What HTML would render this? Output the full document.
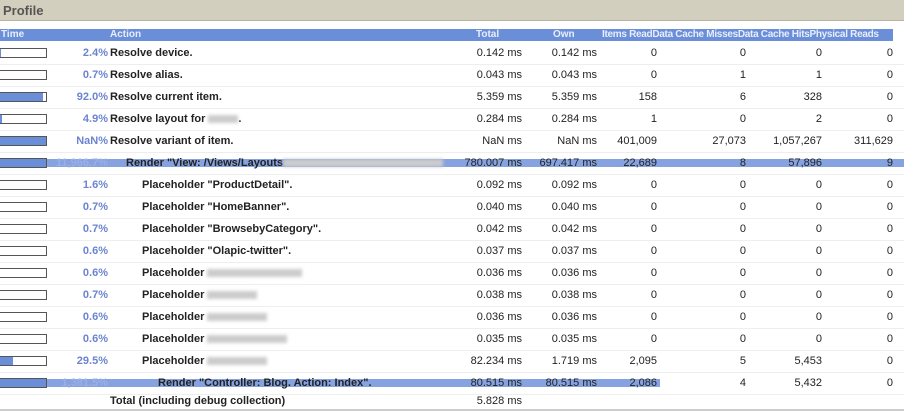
<!DOCTYPE html>
<html><head><style>
body{margin:0;width:904px;height:411px;overflow:hidden;background:#fff;font-family:"Liberation Sans",sans-serif;font-size:11px;color:#222;position:relative}
.hdr{position:absolute;left:0;top:0;width:904px;height:20px;background:#d3cfbf;border-bottom:1px solid #b8b4a4}
.hdr span{position:absolute;left:3px;top:3px;font-size:13px;color:#555;font-weight:bold}
.ch{position:absolute;left:0;top:29px;width:893px;height:12px;background:#6b8ed8;color:#e8eefc;font-size:10px;line-height:12px;font-weight:bold}
.ch span{position:absolute;top:0}
.r{position:absolute;left:0;width:904px;height:22px;border-bottom:1px solid #eee;line-height:22px}
.r>*{position:absolute;top:0}
.bar{left:0;top:6px;width:46px;height:8px;border:1px solid #555;border-left:none;background:#fff}
.bar i{position:absolute;left:0;top:0;height:8px;background:#6b8ed8}
.p{right:796px;color:#6b84d0;font-weight:bold;text-align:right}
.a{font-weight:bold;white-space:nowrap}
.n{text-align:right}
.c1{right:382px}.c2{right:307px}.c3{right:247px}.c4{right:158px}.c5{right:82px}.c6{right:11px}
.bl{display:inline-block;width:70px;height:8px;background:#ccc;vertical-align:middle;filter:blur(1.5px)}
.hl{position:absolute;left:0;top:7px;height:8px;background:#86a2e0}
</style></head><body>
<div class="hdr"><span>Profile</span></div>
<div class="ch"><span style="left:1px">Time</span><span style="left:110px">Action</span><span style="left:476px">Total</span><span style="left:553px">Own</span><span style="left:602px;letter-spacing:-0.3px">Items ReadData Cache MissesData Cache HitsPhysical Reads</span></div>

<div class="r" style="top:42px"><div class="bar"><i style="width:1px"></i></div><span class="p">2.4%</span><span class="a" style="left:110px">Resolve device.</span><span class="n c1">0.142 ms</span><span class="n c2">0.142 ms</span><span class="n c3">0</span><span class="n c4">0</span><span class="n c5">0</span><span class="n c6">0</span></div>
<div class="r" style="top:64px"><div class="bar"></div><span class="p">0.7%</span><span class="a" style="left:110px">Resolve alias.</span><span class="n c1">0.043 ms</span><span class="n c2">0.043 ms</span><span class="n c3">0</span><span class="n c4">1</span><span class="n c5">1</span><span class="n c6">0</span></div>
<div class="r" style="top:86px"><div class="bar"><i style="width:43px"></i></div><span class="p">92.0%</span><span class="a" style="left:110px">Resolve current item.</span><span class="n c1">5.359 ms</span><span class="n c2">5.359 ms</span><span class="n c3">158</span><span class="n c4">6</span><span class="n c5">328</span><span class="n c6">0</span></div>
<div class="r" style="top:108px"><div class="bar"><i style="width:2px"></i></div><span class="p">4.9%</span><span class="a" style="left:110px">Resolve layout for <span class="bl" style="width:30px"></span>.</span><span class="n c1">0.284 ms</span><span class="n c2">0.284 ms</span><span class="n c3">1</span><span class="n c4">0</span><span class="n c5">2</span><span class="n c6">0</span></div>
<div class="r" style="top:130px"><div class="bar"><i style="width:46px"></i></div><span class="p">NaN%</span><span class="a" style="left:110px">Resolve variant of item.</span><span class="n c1">NaN ms</span><span class="n c2">NaN ms</span><span class="n c3">401,009</span><span class="n c4">27,073</span><span class="n c5">1,057,267</span><span class="n c6">311,629</span></div>
<div class="r" style="top:152px"><div class="hl" style="width:904px"></div><div class="bar"><i style="width:46px"></i></div><span class="p" style="color:#9ab0e6">11,966.7%</span><span class="a" style="left:126px">Render "View: /Views/Layouts<span class="bl" style="width:160px"></span></span><span class="n c1">780.007 ms</span><span class="n c2">697.417 ms</span><span class="n c3">22,689</span><span class="n c4">8</span><span class="n c5">57,896</span><span class="n c6">9</span></div>
<div class="r" style="top:174px"><div class="bar"></div><span class="p">1.6%</span><span class="a" style="left:142px">Placeholder "ProductDetail".</span><span class="n c1">0.092 ms</span><span class="n c2">0.092 ms</span><span class="n c3">0</span><span class="n c4">0</span><span class="n c5">0</span><span class="n c6">0</span></div>
<div class="r" style="top:196px"><div class="bar"></div><span class="p">0.7%</span><span class="a" style="left:142px">Placeholder "HomeBanner".</span><span class="n c1">0.040 ms</span><span class="n c2">0.040 ms</span><span class="n c3">0</span><span class="n c4">0</span><span class="n c5">0</span><span class="n c6">0</span></div>
<div class="r" style="top:218px"><div class="bar"></div><span class="p">0.7%</span><span class="a" style="left:142px">Placeholder "BrowsebyCategory".</span><span class="n c1">0.042 ms</span><span class="n c2">0.042 ms</span><span class="n c3">0</span><span class="n c4">0</span><span class="n c5">0</span><span class="n c6">0</span></div>
<div class="r" style="top:240px"><div class="bar"></div><span class="p">0.6%</span><span class="a" style="left:142px">Placeholder "Olapic-twitter".</span><span class="n c1">0.037 ms</span><span class="n c2">0.037 ms</span><span class="n c3">0</span><span class="n c4">0</span><span class="n c5">0</span><span class="n c6">0</span></div>
<div class="r" style="top:262px"><div class="bar"></div><span class="p">0.6%</span><span class="a" style="left:142px">Placeholder <span class="bl" style="width:95px"></span></span><span class="n c1">0.036 ms</span><span class="n c2">0.036 ms</span><span class="n c3">0</span><span class="n c4">0</span><span class="n c5">0</span><span class="n c6">0</span></div>
<div class="r" style="top:284px"><div class="bar"></div><span class="p">0.7%</span><span class="a" style="left:142px">Placeholder <span class="bl" style="width:50px"></span></span><span class="n c1">0.038 ms</span><span class="n c2">0.038 ms</span><span class="n c3">0</span><span class="n c4">0</span><span class="n c5">0</span><span class="n c6">0</span></div>
<div class="r" style="top:306px"><div class="bar"></div><span class="p">0.6%</span><span class="a" style="left:142px">Placeholder <span class="bl" style="width:60px"></span></span><span class="n c1">0.036 ms</span><span class="n c2">0.036 ms</span><span class="n c3">0</span><span class="n c4">0</span><span class="n c5">0</span><span class="n c6">0</span></div>
<div class="r" style="top:328px"><div class="bar"></div><span class="p">0.6%</span><span class="a" style="left:142px">Placeholder <span class="bl" style="width:80px"></span></span><span class="n c1">0.035 ms</span><span class="n c2">0.035 ms</span><span class="n c3">0</span><span class="n c4">0</span><span class="n c5">0</span><span class="n c6">0</span></div>
<div class="r" style="top:350px"><div class="bar"><i style="width:13px"></i></div><span class="p">29.5%</span><span class="a" style="left:142px">Placeholder <span class="bl" style="width:60px"></span></span><span class="n c1">82.234 ms</span><span class="n c2">1.719 ms</span><span class="n c3">2,095</span><span class="n c4">5</span><span class="n c5">5,453</span><span class="n c6">0</span></div>
<div class="r" style="top:372px"><div class="hl" style="width:660px"></div><div class="bar"><i style="width:46px"></i></div><span class="p" style="color:#9ab0e6">1,381.5%</span><span class="a" style="left:158px">Render "Controller: Blog. Action: Index".</span><span class="n c1">80.515 ms</span><span class="n c2">80.515 ms</span><span class="n c3">2,086</span><span class="n c4">4</span><span class="n c5">5,432</span><span class="n c6">0</span></div>
<div class="r" style="top:394px;border-bottom:2px solid #ccc;height:15px;line-height:15px"><span class="a" style="left:110px">Total (including debug collection)</span><span class="n c1">5.828 ms</span></div>
</body></html>
